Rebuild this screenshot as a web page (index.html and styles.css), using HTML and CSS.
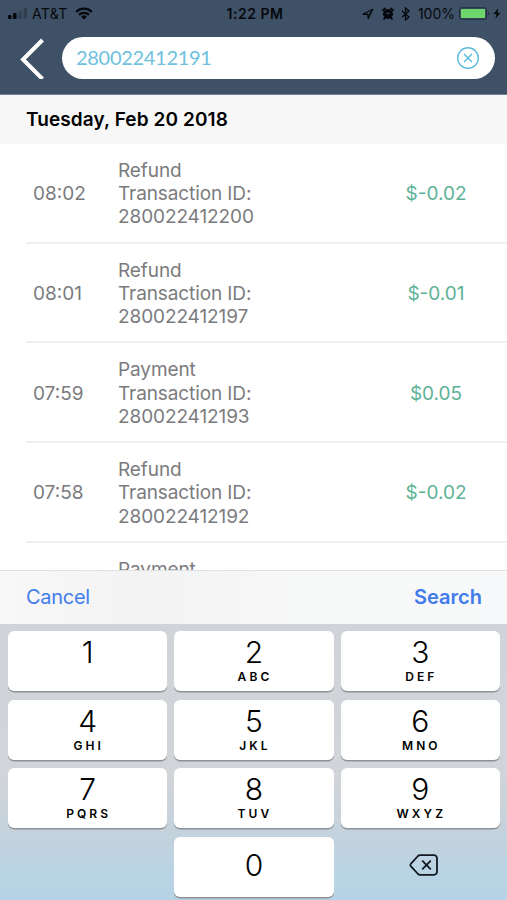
FILE: index.html
```html
<!DOCTYPE html>
<html lang="en">

<head>
  <meta charset="UTF-8" />
  <meta name="viewport" content="width=device-width, initial-scale=1.0" />
  <title>Transactions</title>
  <link rel="stylesheet" href="styles.css">
</head>

<body>
  <header class="header">
    <div class="status">
      <div class="status-left">
        <svg class="signal" width="20" height="12" viewBox="0 0 20 12">
          <rect x="0" y="7" width="3.6" height="4" rx="1" />
          <rect x="5" y="5" width="3.6" height="6" rx="1" />
          <rect class="weak" x="10.4" y="3" width="3.4" height="8" rx="1" />
          <rect class="weak" x="15.6" y="0" width="3.4" height="11" rx="1" />
        </svg>
        <span class="carrier">AT&amp;T</span>
        <svg class="wifi" width="18" height="13" viewBox="0 0 18 13">
          <path d="M1.2 4.8a11.2 11.2 0 0 1 15.6 0M4 7.8a7.2 7.2 0 0 1 10 0" fill="none" stroke="#05080c" stroke-width="2.3" />
          <path d="M9 12.6 6.1 9.7a4.2 4.2 0 0 1 5.8 0z" />
        </svg>
      </div>
      <div class="clock">1:22 PM</div>
      <div class="status-right">
        <svg width="12" height="12" viewBox="0 0 12 12">
          <path d="M1 6.3 10.7 1.2 6.2 10.8 5.8 6.4z" fill="none" stroke="#05080c" stroke-width="1.2" stroke-linejoin="round" />
          <path d="M10.7 1.2 6.2 10.8 5.8 6.4z" opacity=".5" />
        </svg>
        <svg class="alarm" width="12" height="13" viewBox="0 0 12 13">
          <circle cx="6" cy="7" r="5" />
          <path d="M.9 3.4 3 1.5M11.1 3.4 9 1.5M2.8 11l-.8 1M9.2 11l.8 1" stroke="#05080c" stroke-width="1.8" stroke-linecap="round" />
          <path d="M4 5.6 6 7.2 8.2 5.4" fill="none" stroke="#3f5166" stroke-width="1" />
        </svg>
        <svg class="bluetooth" width="9" height="14" viewBox="0 0 9 14">
          <path d="M.8 3.8 8 10 4.5 13V1L8 4 .8 10.2" fill="none" stroke="#05080c" stroke-width="1.3" />
        </svg>
        <span class="percent">100%</span>
        <svg class="battery" width="31" height="13" viewBox="0 0 31 13">
          <rect x=".5" y=".8" width="27" height="11.4" rx="2" fill="none" stroke="#202c38" stroke-width="1" />
          <rect x="2" y="2" width="24" height="9" rx=".6" fill="#6dd66c" />
          <path d="M29 4.8q1.5 1.7 0 3.4z" />
        </svg>
        <svg class="bolt" width="8" height="11" viewBox="0 0 8 11">
          <path d="M5.2.2.5 6h2.9L2.5 10.8 7.4 4.7H4.5z" />
        </svg>
      </div>
    </div>
    <div class="search-row">
      <svg class="back" width="26" height="42" viewBox="0 0 26 42">
        <path d="M24.5 3 5 22.5 24.5 42" fill="none" stroke="#fff" stroke-width="4" />
      </svg>
      <div class="search">
        <span class="query">280022412191</span>
        <svg width="24" height="24" viewBox="0 0 24 24" fill="none" stroke="#5fbbdc">
          <circle cx="12" cy="12" r="10.3" stroke-width="1.4" />
          <path d="m8 8 8 8m0-8-8 8" stroke-width="1.5" />
        </svg>
      </div>
    </div>
  </header>

  <h2 class="date">Tuesday, Feb 20 2018</h2>

  <main class="list">
    <div class="item">
      <div class="time">08:02</div>
      <div class="details">Refund<br>Transaction ID:<br>280022412200</div>
      <div class="amount">$-0.02</div>
    </div>
    <div class="item">
      <div class="time">08:01</div>
      <div class="details">Refund<br>Transaction ID:<br>280022412197</div>
      <div class="amount">$-0.01</div>
    </div>
    <div class="item">
      <div class="time">07:59</div>
      <div class="details">Payment<br>Transaction ID:<br>280022412193</div>
      <div class="amount">$0.05</div>
    </div>
    <div class="item">
      <div class="time">07:58</div>
      <div class="details">Refund<br>Transaction ID:<br>280022412192</div>
      <div class="amount">$-0.02</div>
    </div>
    <div class="item">
      <div class="time"></div>
      <div class="details">Payment<br><br><br></div>
      <div class="amount"></div>
    </div>
  </main>

  <div class="toolbar">
    <span class="cancel">Cancel</span>
    <span class="submit">Search</span>
  </div>

  <div class="keyboard">
    <div class="key">1</div>
    <div class="key">2<small>ABC</small></div>
    <div class="key">3<small>DEF</small></div>
    <div class="key">4<small>GHI</small></div>
    <div class="key">5<small>JKL</small></div>
    <div class="key">6<small>MNO</small></div>
    <div class="key">7<small>PQRS</small></div>
    <div class="key">8<small>TUV</small></div>
    <div class="key">9<small>WXYZ</small></div>
    <div></div>
    <div class="key zero">0</div>
    <div class="delete">
      <svg width="30" height="22" viewBox="0 0 30 22" fill="none" stroke="#111820" stroke-linejoin="round">
        <path d="M11 1.2H25a3 3 0 0 1 3 3v13.6a3 3 0 0 1-3 3H11a3 3 0 0 1-2-.8L2 12.4a1.9 1.9 0 0 1 0-2.8L9 2a3 3 0 0 1 2-.8z" stroke-width="1.8" />
        <path d="m13.2 6.7 8.6 8.6m0-8.6-8.6 8.6" stroke-width="1.8" />
      </svg>
    </div>
  </div>
</body>

</html>
```
FILE: styles.css
```css
* {
  padding: 0;
  margin: 0;
  box-sizing: border-box;
}

body {
  width: 507px;
  height: 900px;
  overflow: hidden;
  display: flex;
  flex-direction: column;
  background: #fff;
  font-family: Inter, "Liberation Sans", sans-serif;
}

svg {
  display: block;
  flex-shrink: 0;
}

.header {
  height: 95px;
  background: #3f5166;
  border-bottom: 1px solid #718092;
}

.status {
  height: 27px;
  display: grid;
  grid-template-columns: 1fr auto 1fr;
  align-items: center;
  padding: 0 6px 0 8px;
  color: #05080c;
  fill: #05080c;
  font-size: 14px;
}

.status-left,
.status-right {
  display: flex;
  align-items: center;
}

.status-right {
  justify-content: flex-end;
}

.weak {
  opacity: 0.25;
}

.carrier {
  margin: 0 7px 0 4px;
  letter-spacing: 0.3px;
}

.clock {
  padding-left: 1px;
  font-weight: 600;
  letter-spacing: 0.5px;
}

.alarm {
  margin-left: 8px;
}

.bluetooth {
  margin: 0 8px 0 7px;
}

.percent {
  margin-right: 4px;
}

.bolt {
  margin-left: 3px;
}

.search-row {
  display: flex;
  align-items: center;
  padding: 10px 12px 0 18px;
}

.search {
  flex: 1;
  height: 42px;
  margin-left: 18px;
  padding: 0 15px 0 14px;
  display: flex;
  align-items: center;
  justify-content: space-between;
  background: #fff;
  border-radius: 21px;
}

.query {
  padding-bottom: 2px;
  font-family: Lato, sans-serif;
  font-size: 20px;
  letter-spacing: -0.3px;
  color: #70c1de;
}

.date {
  height: 49px;
  padding-left: 26px;
  background: #f7f7f7;
  font-size: 19px;
  font-weight: 600;
  line-height: 50px;
  letter-spacing: 0.1px;
}

.list {
  height: 426px;
  overflow: hidden;
}

.item {
  height: 99.7px;
  margin-left: 26px;
  padding-top: 2px;
  display: flex;
  align-items: center;
  border-bottom: 2px solid #efeff0;
  color: #7b7b7e;
  font-size: 19px;
  line-height: 23.3px;
}

.time {
  width: 92px;
  padding-left: 7px;
}

.details {
  flex: 1;
  letter-spacing: -0.1px;
}

.amount {
  width: 142px;
  text-align: center;
  color: #5db296;
}

.toolbar {
  height: 54px;
  padding: 0 25px 2px 26px;
  display: flex;
  align-items: center;
  justify-content: space-between;
  background: linear-gradient(90deg, #f8f8f8, #f3f3f3 30%, #f7f8f8 60%, #f7f8f9);
  border-top: 1px solid #dfe0e1;
  color: #427cec;
  font-size: 20px;
}

.cancel {
  letter-spacing: -0.3px;
}

.submit {
  font-weight: 600;
}

.keyboard {
  flex: 1;
  padding: 7px 7px 0 8px;
  display: grid;
  grid-template-columns: repeat(3, 1fr);
  grid-auto-rows: 60px;
  gap: 8.5px 7px;
  background: linear-gradient(#d0d4d9, #d1d4d8 55%, #c5d2dc 75%, #b9d4e4 90%, #b6d3e5);
}

.key {
  padding-top: 3px;
  background: #fff;
  border-radius: 6px;
  box-shadow: 0 1.5px 0 #8e9296;
  text-align: center;
  font-size: 30px;
  font-weight: 350;
  line-height: 36px;
}

.key small {
  display: block;
  padding-left: 2px;
  font-size: 12px;
  font-weight: 600;
  line-height: 13px;
  letter-spacing: 3.1px;
}

.zero {
  padding-top: 10px;
}

.delete {
  display: flex;
  align-items: center;
  justify-content: center;
  padding: 0 0 4px 7px;
}
```
